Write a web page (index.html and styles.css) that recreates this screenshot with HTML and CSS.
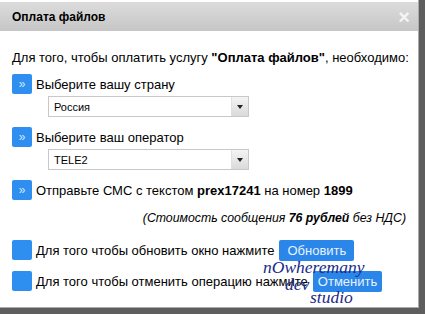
FILE: index.html
```html
<!DOCTYPE html>
<html lang="ru">
  <head>
    <meta charset="UTF-8" />
    <title>Оплата файлов</title>
    <link rel="stylesheet" href="styles.css">
  </head>
  <body>
    <div class="dialog">
      <div class="dialog-title">
        <span>Оплата файлов</span>
        <span class="close">&times;</span>
      </div>

      <div class="dialog-body">
        <p class="intro">
          Для того, чтобы оплатить услугу <b>"Оплата файлов"</b>, необходимо:
        </p>

        <div class="step">
          <span class="mark">&raquo;</span>
          <span>Выберите вашу страну</span>
        </div>
        <div class="select">
          <span class="select-value">Россия</span>
          <span class="select-arrow"></span>
        </div>

        <div class="step">
          <span class="mark">&raquo;</span>
          <span>Выберите ваш оператор</span>
        </div>
        <div class="select">
          <span class="select-value">TELE2</span>
          <span class="select-arrow"></span>
        </div>

        <div class="step">
          <span class="mark">&raquo;</span>
          <span>Отправьте СМС с текстом <b>prex17241</b> на номер <b>1899</b></span>
        </div>
        <p class="price">
          (Стоимость сообщения <b>76 рублей</b> без НДС)
        </p>

        <div class="step action">
          <span class="mark"></span>
          <span>Для того чтобы обновить окно нажмите</span>
          <button class="btn">Обновить</button>
        </div>
        <div class="step action">
          <span class="mark"></span>
          <span>Для того чтобы отменить операцию нажмите</span>
          <button class="btn btn-cancel">Отменить</button>
        </div>
      </div>

      <div class="watermark">
        <span>nOwheremany</span>
        <span class="wm-dev">dev</span>
        <span class="wm-studio">studio</span>
      </div>
    </div>
  </body>
</html>
```

FILE: styles.css
```css
* {
  box-sizing: border-box;
  margin: 0;
  padding: 0;
}

body {
  background: #5e5e5e;
  width: 425px;
  height: 314px;
  overflow: hidden;
  font-family: "Liberation Sans", sans-serif;
  color: #000;
}

.dialog {
  position: relative;
  width: 419px;
  height: 308px;
  background: #fff;
  border-right: 1px solid #aaa;
  border-bottom: 1px solid #aaa;
  padding-top: 2px;
}

.dialog-title {
  display: flex;
  justify-content: space-between;
  align-items: center;
  height: 29px;
  padding: 0 8px 0 12px;
  background: linear-gradient(#dcdcdc, #c6c6c6);
  font-weight: bold;
  font-size: 12px;
}

.close {
  color: #f4f4f4;
  font-size: 20px;
  line-height: 1;
}

.dialog-body {
  padding: 19px 12px 0 12px;
  font-size: 13px;
  line-height: 15px;
}

.intro {
  margin-bottom: 9px;
  white-space: nowrap;
}

.step {
  display: flex;
  align-items: center;
  gap: 4px;
  height: 20px;
  white-space: nowrap;
}

.mark {
  display: flex;
  align-items: center;
  justify-content: center;
  flex: none;
  width: 20px;
  height: 20px;
  border-radius: 2px;
  background: #2f8ff0;
  color: #cfe6ff;
  font-size: 12px;
}

.select {
  display: flex;
  width: 201px;
  height: 21px;
  margin: 2px 0 10px 36px;
  border: 1px solid #c8c8c8;
  font-size: 11px;
}

.select-value {
  flex: 1;
  padding: 3px 5px;
}

.select-arrow {
  width: 17px;
  border-left: 1px solid #e0e0e0;
  background: linear-gradient(#f4f4f4, #dadada);
  position: relative;
}

.select-arrow::after {
  content: "";
  position: absolute;
  left: 5px;
  top: 8px;
  border-left: 3px solid transparent;
  border-right: 3px solid transparent;
  border-top: 4px solid #222;
}

.price {
  text-align: right;
  font-style: italic;
  font-size: 12.3px;
  margin: 11px 0 14px;
}

.action {
  margin-bottom: 11px;
}

.btn {
  height: 21px;
  margin-left: 1px;
  padding: 0 8px;
  border: none;
  border-radius: 2px;
  background: #2a86e8;
  color: #e8f2ff;
  font-family: "Liberation Sans", sans-serif;
  font-size: 13px;
}

.btn-cancel {
  padding: 0 5px;
}

.watermark {
  position: absolute;
  left: 263px;
  top: 260px;
  display: flex;
  flex-direction: column;
  font-family: "Liberation Serif", serif;
  font-style: italic;
  font-size: 17.5px;
  line-height: 15px;
  color: #1a2a88;
}

.wm-dev {
  padding-left: 22px;
  margin-top: 2px;
}

.wm-studio {
  padding-left: 47px;
  margin-top: -2px;
}
```
